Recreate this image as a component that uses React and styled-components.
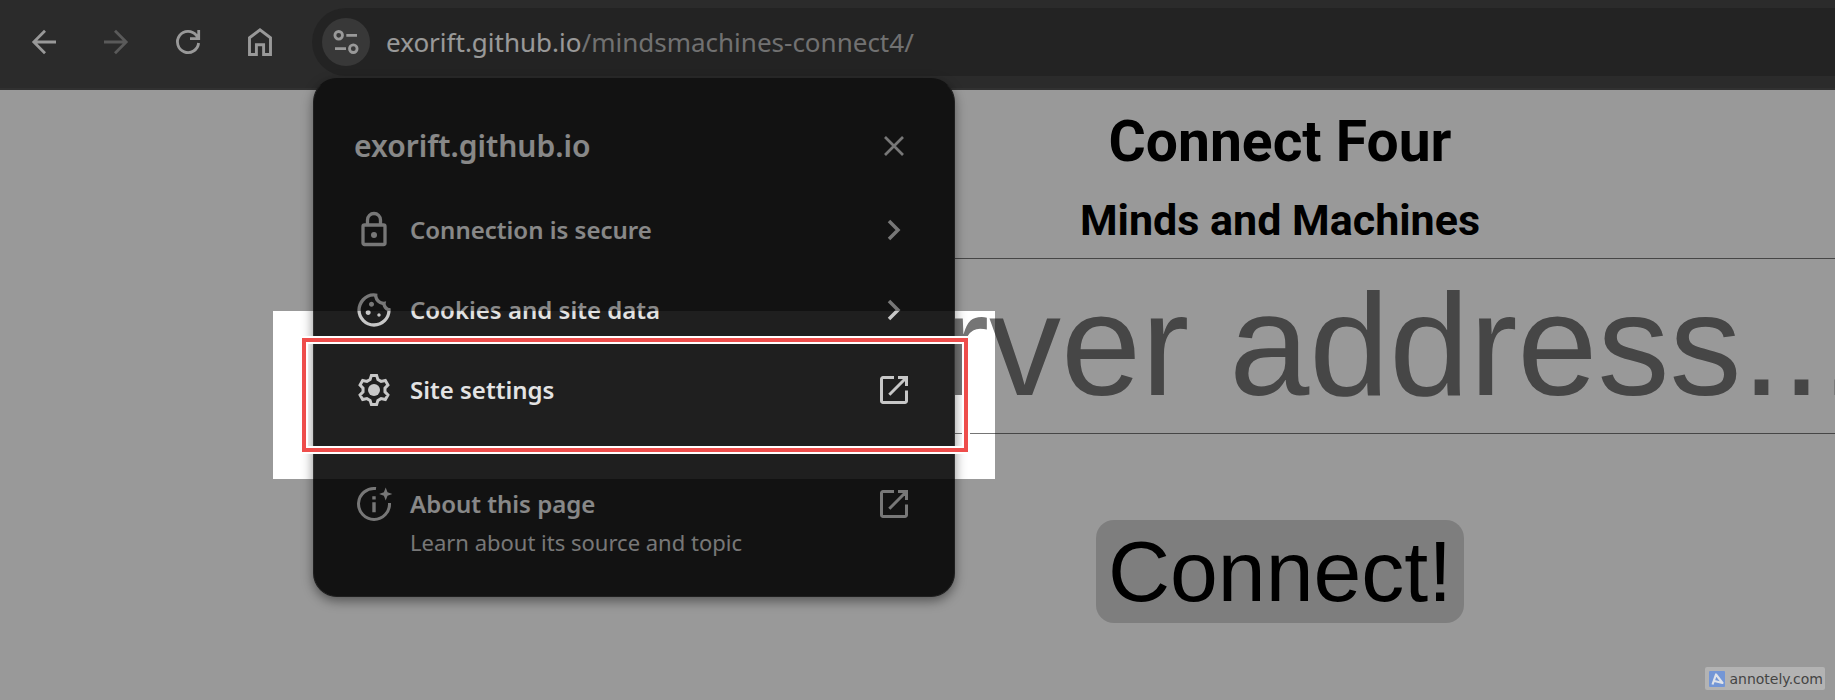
import React from "react";
import styled, { createGlobalStyle } from "styled-components";

const GlobalStyle = createGlobalStyle`
  *, *::before, *::after { box-sizing: border-box; }
  body { margin: 0; background: #fff; }
  button, input { font: inherit; color: inherit; border: 0; margin: 0; padding: 0; background: none; }
  h1, h2, p { margin: 0; }
`;

const uiFont = `"Noto Sans", "Open Sans", sans-serif`;

const Screen = styled.div`
  position: relative;
  display: flex;
  flex-direction: column;
  min-height: 100vh;
  overflow: hidden;
  background: #fff;
`;

const Toolbar = styled.header`
  display: flex;
  align-items: flex-start;
  gap: 28px;
  height: 90px;
  padding: 8px 0 0 20px;
  background: #484848;
  border-bottom: 2px solid #535353;
  font-family: ${uiFont};
`;

const NavButtons = styled.nav`
  display: flex;
  gap: 24px;
  padding-top: 10px;
`;

const IconButton = styled.button`
  display: flex;
  align-items: center;
  justify-content: center;
  flex: none;
  width: 48px;
  height: 48px;
  border-radius: 24px;
  color: ${(p) => (p.$faded ? "#969696" : "#fff")};
  background: ${(p) => (p.$filled ? "#5e5e5e" : "transparent")};
`;

const AddressBar = styled.div`
  position: relative;
  display: flex;
  align-items: center;
  gap: 16px;
  flex: 1;
  height: 68px;
  padding-left: 10px;
  border-radius: 34px 0 0 34px;
  background: #3b3b3b;
`;

const AddressLabel = styled.label`
  display: flex;
  flex: 1;
  font-size: 26px;
  line-height: 36px;
  color: #fff;
`;

const AddressInput = styled.input`
  flex: 1;
  min-width: 0;
  color: #bdbdbd;
  outline: none;
`;

const Icon = styled.svg`
  display: block;
  flex: none;
  fill: none;
  stroke: currentColor;
  overflow: visible;
`;

const SitePopup = styled.section`
  position: absolute;
  z-index: 10;
  top: 70px;
  left: 1px;
  width: 642px;
  padding: 32px 0 36px;
  border: 1px solid #343434;
  border-top-color: #1f1f1f;
  border-radius: 24px;
  background: #1f1f1f;
  box-shadow: 0 4px 12px rgba(0, 0, 0, 0.45);
  color: #e3e3e3;
`;

const PopupHeader = styled.div`
  display: flex;
  align-items: center;
  justify-content: space-between;
  height: 70px;
  margin-bottom: 9px;
  padding: 0 36px 0 40px;
`;

const PopupTitle = styled.h2`
  font-size: 30px;
  line-height: 40px;
  font-weight: 600;
`;

const CloseButton = styled(IconButton)`
  color: #c7c7c7;
`;

const MenuRow = styled.button`
  position: relative;
  z-index: ${(p) => (p.$marked ? 1 : 0)};
  display: grid;
  grid-template-columns: 40px 1fr 48px;
  column-gap: 16px;
  align-items: ${(p) => (p.$twoLines ? "start" : "center")};
  width: 100%;
  height: ${(p) => (p.$twoLines ? "76px" : "80px")};
  padding: 0 36px 0 40px;
  text-align: left;
`;

const RowIcon = styled.span`
  display: flex;
  align-items: center;
  justify-content: center;
  height: 40px;
  color: #c7c7c7;
`;

const RowText = styled.span`
  display: flex;
  flex-direction: column;
`;

const RowTitle = styled.span`
  font-size: 24px;
  line-height: 40px;
  font-weight: 600;
`;

const RowNote = styled.span`
  font-size: 22px;
  line-height: 36px;
  color: #c7c7c7;
`;

const Divider = styled.hr`
  height: 1px;
  margin: 16px 40px 37px;
  border: 0;
  background: #757575;
`;

const Spotlight = styled.span`
  position: absolute;
  inset: -39px -41px -49px;
  box-shadow: 0 0 0 3000px rgba(0, 0, 0, 0.4);
  pointer-events: none;
`;

const HighlightFrame = styled.span`
  position: absolute;
  inset: -12px -14px -22px -12px;
  border: 4px solid #ee4d4b;
  box-shadow: 0 0 0 2px #fff, inset 0 0 0 2px #fff;
  pointer-events: none;
`;

const Game = styled.main`
  display: flex;
  flex-direction: column;
  align-items: center;
  padding: 20px 0 60px 725px;
  color: #000;
`;

const GameTitle = styled.h1`
  font: 700 57px/64px Roboto, sans-serif;
`;

const GameSubtitle = styled.h2`
  margin-top: 20px;
  font: 700 43px/52px Roboto, sans-serif;
`;

const ServerInput = styled.input`
  width: 100%;
  height: 176px;
  margin-top: 12px;
  padding-left: 40px;
  border: solid #757575;
  border-width: 1px 0;
  font: 144px/164px "Liberation Sans", Arial, sans-serif;
  outline: none;

  &::placeholder { color: #757575; opacity: 1; }
`;

const ConnectButton = styled.button`
  margin-top: 86px;
  padding: 2px 12px;
  border-radius: 18px;
  background: #d3d3d3;
  font: 86px/99px "Liberation Sans", Arial, sans-serif;
`;

const Watermark = styled.a`
  position: absolute;
  z-index: 20;
  right: 10px;
  bottom: 10px;
  display: flex;
  align-items: center;
  gap: 4px;
  height: 23px;
  padding: 0 2px 0 4px;
  border-radius: 2px;
  background: #b3b3b3;
  color: #444;
  font: 14px/20px "DejaVu Sans", Verdana, sans-serif;
  text-decoration: none;
`;

const BackIcon = () => (
  <Icon width="24" height="24" viewBox="0 0 24 24" strokeWidth="2.8">
    <path d="M24 12H2M13 .8 1.8 12 13 23.2" />
  </Icon>
);

const ForwardIcon = () => (
  <Icon width="24" height="24" viewBox="0 0 24 24" strokeWidth="2.8">
    <path d="M0 12h22M11 .8 22.2 12 11 23.2" />
  </Icon>
);

const ReloadIcon = () => (
  <Icon width="24" height="24" viewBox="0 0 24 24" strokeWidth="2.8">
    <path d="M22.6 13A10.6 10.6 0 1 1 20.4 5.4L22.6 8.7M22.7 0v8.7H14" />
  </Icon>
);

const HomeIcon = () => (
  <Icon width="24" height="28" viewBox="0 0 24 28" strokeWidth="2.9">
    <path d="M1.5 26.5V9.8L12 1.9l10.500 7.900v16.700h-6.900v-9.700H8.400v9.700z" />
  </Icon>
);

const TuneIcon = () => (
  <Icon width="24" height="24" viewBox="0 0 24 24" strokeWidth="2.8">
    <circle cx="4.700" cy="5.300" r="3.800" />
    <path d="M12.300 5.300H23M1 18.700h11" />
    <circle cx="19.300" cy="18.700" r="3.800" />
  </Icon>
);

const CloseIcon = () => (
  <Icon width="20" height="20" viewBox="0 0 20 20" strokeWidth="2.700">
    <path d="M1 1l18 18M19 1 1 19" />
  </Icon>
);

const ChevronIcon = () => (
  <Icon width="12" height="20" viewBox="0 0 12 20" strokeWidth="3.500">
    <path d="M1 1l9 9-9 9" />
  </Icon>
);

const LockIcon = () => (
  <Icon width="36" height="36" viewBox="0 0 36 36" strokeWidth="3.300">
    <rect x="7" y="13" width="22" height="19.500" rx="1.500" />
    <path d="M11.500 13V8a6.500 6.500 0 0 1 13 0v5" />
    <circle cx="18" cy="23" r="3" fill="currentColor" stroke="none" />
  </Icon>
);

const CookieIcon = () => (
  <Icon width="40" height="40" viewBox="0 -960 960 960">
    <path
      fill="currentColor"
      stroke="none"
      d="M480-80q-83 0-156-31.500T197-197q-54-54-85.500-127T80-480q0-75 29-147t81-128.500q52-56.500 125-91T475-881q21 0 43 2t45 7q-9 45 6 85t45 66.500q30 26.500 71.500 36.500t85.500-5q-26 59 7.500 113t99.500 56q1 11 1.500 20.500t.5 20.500q0 82-31.500 154.500t-85.500 127q-54 54.500-127 86T480-80Zm-60-480q25 0 42.500-17.500T480-620q0-25-17.500-42.500T420-680q-25 0-42.500 17.500T360-620q0 25 17.500 42.500T420-560Zm-80 200q25 0 42.500-17.500T400-420q0-25-17.500-42.500T340-480q-25 0-42.500 17.500T280-420q0 25 17.500 42.500T340-360Zm260 40q17 0 28.500-11.500T640-360q0-17-11.500-28.500T600-400q-17 0-28.500 11.500T560-360q0 17 11.500 28.500T600-320ZM480-160q122 0 216.500-84T800-458q-50-22-78.500-60T683-603q-77-11-132-66t-68-132q-80-2-140.500 29t-101 79.500Q201-644 180.500-587T160-480q0 133 93.500 226.500T480-160Z"
    />
  </Icon>
);

/* One tooth of the gear outline, turned in steps of 60 degrees. */
const gearPath = (() => {
  const tooth = [[-3.9, -10.4], [-2.600, -14.600], [2.600, -14.600], [3.900, -10.400]];
  const points = [];
  for (let i = 0; i < 6; i += 1) {
    const a = (i * Math.PI) / 3;
    tooth.forEach(([x, y]) => {
      points.push(
        `${(x * Math.cos(a) - y * Math.sin(a)).toFixed(2)} ${(x * Math.sin(a) + y * Math.cos(a)).toFixed(2)}`
      );
    });
  }
  return `M${points.join("L")}Z`;
})();

const GearIcon = () => (
  <Icon width="40" height="40" viewBox="-20 -20 40 40" strokeWidth="3">
    <path d={gearPath} />
    <circle r="6" fill="currentColor" stroke="none" />
  </Icon>
);

const LaunchIcon = () => (
  <Icon width="28" height="28" viewBox="0 0 28 28" strokeWidth="3">
    <path d="M14 1.500H3A1.500 1.500 0 0 0 1.500 3v22A1.500 1.500 0 0 0 3 26.500h22a1.500 1.500 0 0 0 1.500-1.500V14.500M18 1.500h8.500V10M9.300 18.700 26 2" />
  </Icon>
);

const AboutIcon = () => (
  <Icon width="40" height="40" viewBox="-20 -20 40 40" strokeWidth="3">
    <path d="M2 -15.400A15.500 15.500 0 1 0 15.500 -1" />
    <path d="M0 -1.700V8.300M0 -7.800v3.200" strokeWidth="3.400" />
    <path
      fill="currentColor"
      stroke="none"
      d="M11.700 -16.500 13.500 -11.800 18.300 -10 13.500 -8.200 11.700 -3.500 9.900 -8.200 5.100 -10 9.900 -11.800Z"
    />
  </Icon>
);

const AnnotelyLogo = () => (
  <Icon width="16" height="16" viewBox="0 0 16 16">
    <rect width="16" height="16" rx="1" fill="#7396d6" stroke="none" />
    <path d="M3.500 13.500 7 3.500l6.500 8.500-8-2" stroke="#dfe3ea" strokeWidth="2.200" strokeLinejoin="round" />
  </Icon>
);

function MenuItem({ icon, title, note, trailing, children }) {
  return (
    <MenuRow type="button" $twoLines={Boolean(note)} $marked={Boolean(children)}>
      <RowIcon>{icon}</RowIcon>
      <RowText>
        <RowTitle>{title}</RowTitle>
        {note && <RowNote>{note}</RowNote>}
      </RowText>
      <RowIcon>{trailing}</RowIcon>
      {children}
    </MenuRow>
  );
}

export default function App() {
  return (
    <Screen>
      <GlobalStyle />
      <Toolbar>
        <NavButtons>
          <IconButton type="button" aria-label="Back"><BackIcon /></IconButton>
          <IconButton type="button" aria-label="Forward" $faded><ForwardIcon /></IconButton>
          <IconButton type="button" aria-label="Reload"><ReloadIcon /></IconButton>
          <IconButton type="button" aria-label="Home"><HomeIcon /></IconButton>
        </NavButtons>
        <AddressBar>
          <IconButton type="button" aria-label="View site information" $filled><TuneIcon /></IconButton>
          <AddressLabel>
            exorift.github.io
            <AddressInput type="text" defaultValue="/mindsmachines-connect4/" />
          </AddressLabel>
          <SitePopup>
            <PopupHeader>
              <PopupTitle>exorift.github.io</PopupTitle>
              <CloseButton type="button" aria-label="Close"><CloseIcon /></CloseButton>
            </PopupHeader>
            <MenuItem icon={<LockIcon />} title="Connection is secure" trailing={<ChevronIcon />} />
            <MenuItem icon={<CookieIcon />} title="Cookies and site data" trailing={<ChevronIcon />} />
            <MenuItem icon={<GearIcon />} title="Site settings" trailing={<LaunchIcon />}>
              <Spotlight />
              <HighlightFrame />
            </MenuItem>
            <Divider />
            <MenuItem
              icon={<AboutIcon />}
              title="About this page"
              note="Learn about its source and topic"
              trailing={<LaunchIcon />}
            />
          </SitePopup>
        </AddressBar>
      </Toolbar>
      <Game>
        <GameTitle>Connect Four</GameTitle>
        <GameSubtitle>Minds and Machines</GameSubtitle>
        <ServerInput type="text" aria-label="Server address" placeholder="Server address..." />
        <ConnectButton type="button">Connect!</ConnectButton>
      </Game>
      <Watermark href="#annotely">
        <AnnotelyLogo />
        annotely.com
      </Watermark>
    </Screen>
  );
}
